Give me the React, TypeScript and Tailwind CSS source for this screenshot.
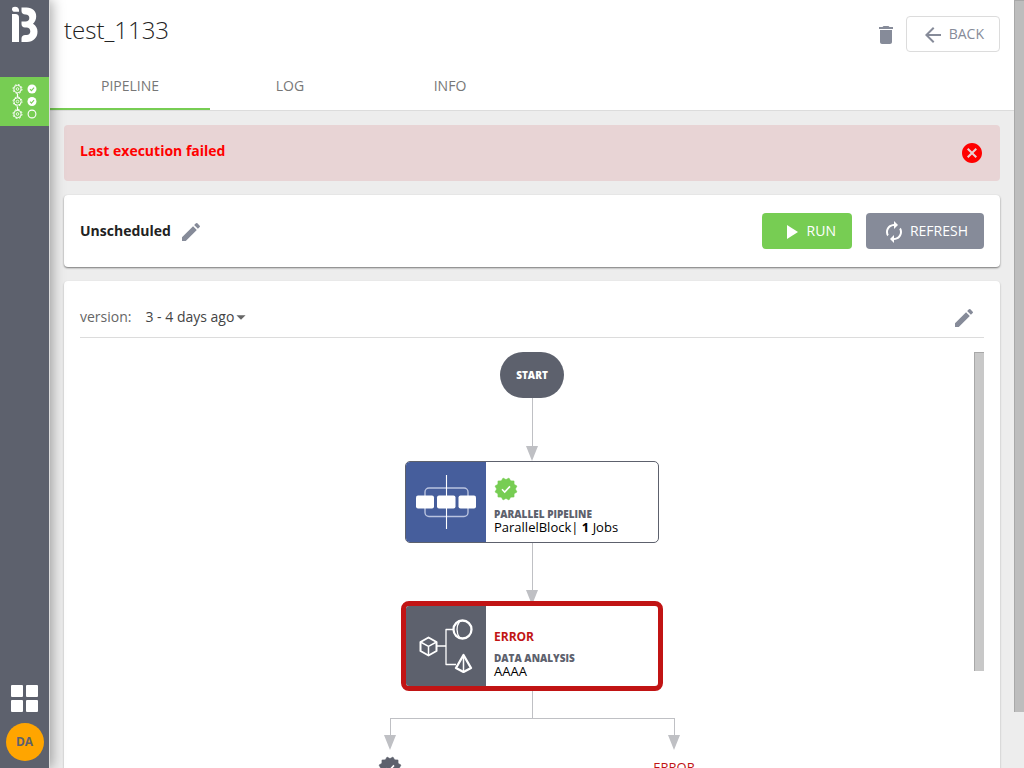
import React from "react";
import {
  MdArrowBack,
  MdArrowDropDown,
  MdAutorenew,
  MdCancel,
  MdDelete,
  MdEdit,
  MdPlayArrow,
} from "react-icons/md";

const tabs = ["Pipeline", "Log", "Info"];

const Logo = () => (
  <svg width="26" height="36" viewBox="0 0 26 36" fill="#fff">
    <path d="M0 3.2C0 1.6 1.2.8 3 .8 5.5.8 7 2.500 7 4.200V5.800H3C1.200 5.800 0 4.800 0 3.200Z" />
    <path d="M0 8H3.500C5.800 8 7 9.200 7 11.500V36H0Z" />
    <path d="M9.500 1.500H14.500C20.500 1.500 24.200 5 24.200 10.200 24.200 13.500 23 16 21 17.800 24 19.500 25.500 22.500 25.500 25.800 25.500 31.800 21.200 36 15 36H9.500V32.500C9.500 30.200 11 29 13.200 29H14.500C17 29 18.300 27.600 18.300 25.300 18.300 22.800 16.800 21.400 14.400 21.400H13C10.800 21.400 9.500 20.200 9.500 18V15.400H13.500C16 15.400 17.300 14 17.300 11.900 17.300 9.800 16 8.500 13.500 8.500 11 8.500 9.500 7.300 9.500 5Z" />
  </svg>
);

const Gear = ({ y }: { y: number }) => (
  <g stroke="#fff" fill="none">
    <circle cx="5.500" cy={y} r="3.700" />
    <circle cx="5.500" cy={y} r="4.500" strokeDasharray="1.800 1.734" />
    <circle cx="5.500" cy={y} r="1.300" strokeWidth=".8" />
  </g>
);

const PipelineIcon = () => (
  <svg width="26" height="38" viewBox="0 0 26 38">
    <path d="M5.500 10.500v4M5.500 23.500v4" stroke="#fff" strokeWidth="1.200" />
    <Gear y={6} />
    <Gear y={18.5} />
    <Gear y={31} />
    <circle cx="20" cy="6" r="4.500" fill="#fff" />
    <circle cx="20" cy="18.500" r="4.500" fill="#fff" />
    <circle cx="20" cy="31" r="3.900" fill="none" stroke="#fff" strokeWidth="1.100" />
    <path d="M18 6.200l1.400 1.400 2.700-2.900M18 18.700l1.400 1.400 2.700-2.900" fill="none" stroke="#77cd53" strokeWidth="1.100" />
  </svg>
);

// 12 pointed seal with a tick
const seal = Array.from({ length: 24 }, (_, i) => {
  const r = i % 2 ? 9.4 : 11.4;
  const a = ((i + 1) * Math.PI) / 12;
  return `${(12 + r * Math.sin(a)).toFixed(2)},${(12 - r * Math.cos(a)).toFixed(2)}`;
}).join(" ");

const Badge = ({ color }: { color: string }) => (
  <svg width="24" height="24" viewBox="0 0 24 24" className="shrink-0">
    <polygon points={seal} fill={color} stroke={color} strokeWidth=".5" strokeLinejoin="round" />
    <path d="M8 12.300l2.700 2.700 5.300-5.600" fill="none" stroke="#fff" strokeWidth="1.600" />
  </svg>
);

const ParallelIcon = () => (
  <svg width="60" height="54" viewBox="0 0 60 54">
    <rect x="9" y="13" width="43" height="28.500" rx="4" fill="none" stroke="#b9c3df" strokeWidth="1.400" />
    <path d="M30.500 0v54" stroke="#fff" strokeWidth="1.100" />
    <rect x="0" y="20.500" width="18" height="13" rx="2" fill="#fff" />
    <rect x="21" y="20.500" width="18.500" height="13" rx="2" fill="#fff" />
    <rect x="42.500" y="20.500" width="17.500" height="13" rx="2" fill="#fff" />
  </svg>
);

const AnalysisIcon = () => (
  <svg width="54" height="54" viewBox="0 0 54 54" fill="none" stroke="#fff" strokeWidth="2" strokeLinejoin="round">
    <path d="M18 27h9M35 10.500h-8v35h10" strokeWidth="1.300" />
    <path d="M9.500 18.500l8 4.500v9l-8 4.500-8-4.500v-9z" />
    <path d="M1.500 23l8 4.300 8-4.300M9.500 27.300v9" strokeWidth="1.500" />
    <circle cx="43.500" cy="10.500" r="9" strokeWidth="2.300" />
    <path d="M40.500 2.500c-3.300 4.500-3.300 11.500 0 16" strokeWidth="1.300" />
    <path d="M44.500 36l-7.500 13 7.500 4 7.500-4z" strokeWidth="2.300" />
    <path d="M44.500 36v17" strokeWidth="1.500" />
  </svg>
);

const Arrow = () => (
  <svg width="12" height="15" viewBox="0 0 12 15" className="shrink-0" fill="#bfc0c4">
    <path d="M0 0h12L6 15z" />
  </svg>
);

const Connector = ({ className }: { className: string }) => (
  <div className={`flex flex-col items-center ${className}`}>
    <div className="w-px flex-1 bg-[#bfc0c4]" />
    <Arrow />
  </div>
);

const Sidebar = () => (
  <nav className="relative z-10 flex w-[50px] shrink-0 flex-col border-r border-[#dddddd] bg-[#5d616d] shadow-[2px_0_12px_rgba(0,0,0,0.35)]">
    <a href="#home" aria-label="Home" className="flex h-[77px] justify-center pt-[6px]">
      <Logo />
    </a>
    <a href="#pipelines" aria-label="Pipelines" className="flex h-[49px] items-center justify-center bg-[#77cd53]">
      <PipelineIcon />
    </a>
    <div className="mt-auto flex flex-col items-center gap-[11px] pb-[7px]">
      <button aria-label="Apps" className="grid grid-cols-2 gap-[3px]">
        <span className="size-3 rounded-[1px] bg-white" />
        <span className="size-3 rounded-[1px] bg-white" />
        <span className="size-3 rounded-[1px] bg-white" />
        <span className="size-3 rounded-[1px] bg-white" />
      </button>
      <button className="size-[38px] rounded-full bg-[#ffa500] text-xs font-bold text-[#5d616d]">DA</button>
    </div>
  </nav>
);

const Header = () => (
  <header className="border-b border-[#dcdcdc] bg-white">
    <div className="flex h-[62px] items-start justify-between px-[14px]">
      <h1 className="pt-[14px] text-2xl font-light text-[#222]">test_1133</h1>
      <div className="flex items-center gap-2 pt-4">
        <button aria-label="Delete" className="text-[#868b99]">
          <MdDelete size={24} className="mt-0.5" />
        </button>
        <button className="flex h-9 items-center gap-1 rounded border border-[#dcdcdc] pr-[15px] pl-[14px] text-sm text-[#868b99]">
          <MdArrowBack size={24} className="mt-0.5" />
          BACK
        </button>
      </div>
    </div>
    <div className="flex h-12" role="tablist">
      {tabs.map((tab, i) => (
        <button
          key={tab}
          role="tab"
          aria-selected={i === 0}
          className={
            i === 0
              ? "w-40 border-b-2 border-[#77cd53] pt-0.5 text-sm text-[#777] uppercase"
              : "w-40 border-b-2 border-transparent pt-0.5 text-sm text-[#777] uppercase"
          }
        >
          {tab}
        </button>
      ))}
    </div>
  </header>
);

const Pipeline = () => (
  <div className="relative flex flex-col items-center pt-[14px]">
    <div className="absolute top-[14px] right-0 h-[319px] w-[10px] border-t border-l border-[#a8a8a8] bg-[#c8c8c8]" />

    <div className="flex h-[46px] w-16 items-center justify-center rounded-full bg-[#5d616d] text-[10px] font-extrabold text-white">
      START
    </div>
    <Connector className="h-[63px]" />

    <div className="flex h-[82px] w-[254px] overflow-hidden rounded-[5px] border border-[#5d616d]">
      <div className="flex w-20 items-center justify-center bg-[#465e9c]">
        <ParallelIcon />
      </div>
      <div className="flex flex-col pt-[15px] pl-2">
        <Badge color="#77cd53" />
        <span className="mt-[7px] text-[10px] leading-3 font-extrabold text-[#5d616d]">PARALLEL PIPELINE</span>
        <span className="text-[13px] leading-[14px] text-black">
          ParallelBlock| <b>1</b> Jobs
        </span>
      </div>
    </div>
    <Connector className="-mb-1 h-[62px]" />

    <div className="relative flex h-[90px] w-[262px] overflow-hidden rounded-lg border-5 border-[#c11414]">
      <div className="flex w-20 items-center justify-center bg-[#5d616d]">
        <AnalysisIcon />
      </div>
      <div className="flex flex-col pt-[22px] pl-2">
        <span className="text-xs leading-[18px] font-bold text-[#c11414]">ERROR</span>
        <span className="mt-[6px] text-[10px] leading-3 font-extrabold text-[#5d616d]">DATA ANALYSIS</span>
        <span className="text-[13px] leading-[14px] text-black">AAAA</span>
      </div>
    </div>
    <div className="h-[27px] w-px bg-[#bfc0c4]" />
    <div className="h-px w-[285px] bg-[#bfc0c4]" />
    <div className="flex w-[344px] justify-between">
      <div className="flex w-15 flex-col items-center">
        <Connector className="h-[31px]" />
        <div className="pt-[6px]">
          <Badge color="#5d616d" />
        </div>
      </div>
      <div className="flex w-15 flex-col items-center">
        <Connector className="h-[31px]" />
        <span className="pt-2 text-[13px] leading-[18px] text-[#c11414]">ERROR</span>
      </div>
    </div>
  </div>
);

const App: React.FC = () => {
  return (
    <div className="flex h-screen overflow-hidden bg-[#ededed] font-['Open_Sans',sans-serif] text-[#222]">
      <Sidebar />
      <main className="min-w-0 flex-1">
        <Header />
        <div className="flex flex-col gap-[14px] p-[14px]">
          <div role="alert" className="flex h-14 items-center justify-between rounded bg-[#e8d4d5] px-4">
            <span className="pb-1 text-sm font-bold text-[#ff0000]">Last execution failed</span>
            <button aria-label="Dismiss" className="text-[#ff0000]">
              <MdCancel size={24} />
            </button>
          </div>

          <section className="flex h-[72px] items-center justify-between rounded bg-white px-4 shadow-[0_1px_2px_rgba(0,0,0,0.5)]">
            <div className="flex items-center gap-2">
              <span className="text-sm font-bold">Unscheduled</span>
              <button aria-label="Edit schedule" className="text-[#868b99]">
                <MdEdit size={24} className="mt-0.5" />
              </button>
            </div>
            <div className="flex gap-[14px]">
              <button className="flex h-9 items-center gap-1 rounded bg-[#77cd53] pr-4 pl-[17px] text-sm font-medium text-white">
                <MdPlayArrow size={24} className="mt-0.5" />
                RUN
              </button>
              <button className="flex h-9 items-center gap-1 rounded bg-[#868b99] pr-4 pl-4 text-sm font-medium text-white">
                <MdAutorenew size={24} className="mt-0.5" />
                REFRESH
              </button>
            </div>
          </section>

          <section className="rounded bg-white px-4 pb-4 shadow-[0_1px_2px_rgba(0,0,0,0.3)]">
            <div className="flex h-[57px] items-center justify-between border-b border-[#dcdcdc] pt-4">
              <div className="flex items-center gap-[14px] text-sm">
                <span id="version-label" className="text-[#666]">version:</span>
                <button aria-labelledby="version-label" className="flex items-center text-[#444]">
                  3 - 4 days ago
                  <MdArrowDropDown size={22} className="-ml-1 text-[#666]" />
                </button>
              </div>
              <button aria-label="Edit pipeline" className="pr-2 text-[#868b99]">
                <MdEdit size={24} className="mt-0.5" />
              </button>
            </div>
            <Pipeline />
          </section>
        </div>
      </main>
      <div className="h-[712px] w-[10px] shrink-0 border-t border-l border-[#a8a8a8] bg-[#bdbdbd]" />
    </div>
  );
};

export default App;
